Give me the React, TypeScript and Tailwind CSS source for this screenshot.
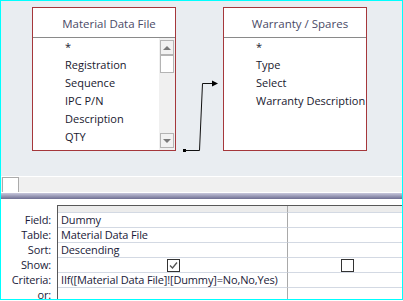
import React from 'react';

const font = { fontFamily: '"Open Sans", "Noto Sans", sans-serif' };

function TableBox({ title, fields, scroll }: { title: string; fields: string[]; scroll?: boolean }) {
  return (
    <div className="w-[144px] h-[144px] border border-[#a5373b] bg-white flex flex-col">
      <div className="h-[30px] flex items-center justify-center pl-[10px] pt-[3px] border-b border-[#8a8a8a] text-[11.5px] text-[#4a4a66]">
        {title}
      </div>
      <div className="flex-1 flex min-h-0">
        <div className="flex-1 pl-[32px] text-[11px] text-[#18182e] whitespace-nowrap overflow-hidden">
          {fields.map((f) => (
            <div key={f} className="h-[18px] flex items-center">
              {f}
            </div>
          ))}
        </div>
        {scroll && (
          <div className="w-[16px] bg-[#f0f0f0] flex flex-col pt-[2px] pb-[2px]">
            <div className="h-[15px] mx-[1px] border border-[#b4b4b4] bg-[#f2f2f2] flex items-center justify-center">
              <div className="w-0 h-0 border-l-[4px] border-r-[4px] border-b-[4px] border-l-transparent border-r-transparent border-b-[#7a7a7a]" />
            </div>
            <div className="h-[18px] mx-[1px] border border-[#b4b4b4] bg-white" />
            <div className="flex-1" />
            <div className="h-[15px] mx-[1px] border border-[#b4b4b4] bg-[#f2f2f2] flex items-center justify-center">
              <div className="w-0 h-0 border-l-[4px] border-r-[4px] border-t-[4px] border-l-transparent border-r-transparent border-t-[#7a7a7a]" />
            </div>
          </div>
        )}
      </div>
    </div>
  );
}

function CheckBox({ checked }: { checked?: boolean }) {
  return (
    <div className="w-[13px] h-[13px] border border-[#333] bg-white flex items-center justify-center">
      {checked && (
        <svg width="11" height="11" viewBox="0 0 11 11">
          <path d="M2 5.5 L4.5 8 L9 2.5" fill="none" stroke="#555" strokeWidth="1.3" />
        </svg>
      )}
    </div>
  );
}

const rows: { label: string; a: React.ReactNode; b?: React.ReactNode }[] = [
  { label: 'Field:', a: 'Dummy' },
  { label: 'Table:', a: 'Material Data File' },
  { label: 'Sort:', a: 'Descending' },
  { label: 'Show:', a: <CheckBox checked />, b: <CheckBox /> },
  { label: 'Criteria:', a: 'IIf([Material Data File]![Dummy]=No,No,Yes)' },
  { label: 'or:', a: '' },
];

export default function App() {
  return (
    <div className="w-[403px] h-[300px] border border-[#00ffff] bg-white flex flex-col overflow-hidden" style={font}>
      {/* Table canvas */}
      <div className="relative h-[175px] shrink-0 bg-[#e9edf1] flex items-start pt-[6px] pl-[31px] gap-[47px]">
        <TableBox
          title="Material Data File"
          fields={['*', 'Registration', 'Sequence', 'IPC P/N', 'Description', 'QTY']}
          scroll
        />
        <TableBox title="Warranty / Spares" fields={['*', 'Type', 'Select', 'Warranty Description']} />
        <svg className="absolute left-0 top-0" width="401" height="175">
          <rect x="182" y="148" width="3" height="3" fill="#000" />
          <path d="M184 149.5 H198.5 L201.5 82.5 H212" fill="none" stroke="#111" strokeWidth="1" />
          <path d="M211 79.5 L217 82.5 L211 85.5 Z" fill="#000" />
        </svg>
      </div>
      <div className="h-[1px] shrink-0 bg-white" />
      {/* splitter strip */}
      <div className="h-[15px] shrink-0 bg-[#f0f0f0] flex">
        <div className="ml-[1px] w-[17px] h-[16px] border border-[#ababab] bg-white" />
      </div>
      <div className="h-[1px] shrink-0 bg-white" />
      <div className="h-[6px] shrink-0 bg-gradient-to-b from-[#c8c8dc] to-[#6e6e92]" />
      {/* Design grid */}
      <div className="flex-1 flex pt-[6px] text-[11px] tracking-[-0.15px] text-[#1a1a38]">
        <div className="w-[56px] shrink-0 flex flex-col items-end pr-[6px] pt-[7px]">
          {rows.map((r) => (
            <div key={r.label} className="h-[15px] flex items-center pt-[1px]">
              {r.label}
            </div>
          ))}
        </div>
        <div className="flex-1 flex flex-col border-t border-l border-[#585858]">
          <div className="h-[6px] flex">
            <div className="w-[230px] bg-[#ececec] border-r border-[#a9a9a9]" />
            <div className="flex-1 bg-[#ececec]" />
          </div>
          {rows.map((r) => (
            <div key={r.label} className="h-[15px] flex">
              <div
                className={`w-[230px] border-t border-[#d3d9e3] border-r border-r-[#a9a9a9] flex items-center whitespace-nowrap ${
                  r.label === 'Show:' ? 'justify-center pl-[2px]' : 'pl-[3px]'
                }`}
              >
                {r.a}
              </div>
              <div className="flex-1 border-t border-[#d3d9e3] flex items-center justify-center pl-[4px]">
                {r.b}
              </div>
            </div>
          ))}
        </div>
      </div>
    </div>
  );
}
